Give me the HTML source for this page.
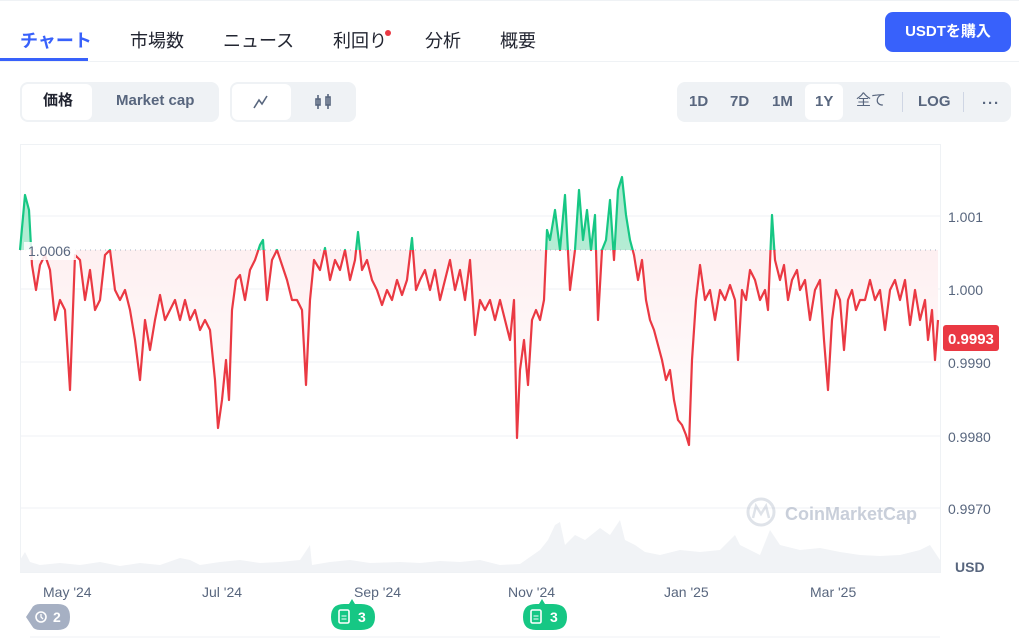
<!DOCTYPE html>
<html><head><meta charset="utf-8"><style>
body{margin:0;width:1019px;height:641px;background:#fff;font-family:"Liberation Sans","Noto Sans CJK JP",sans-serif;position:relative;overflow:hidden}
.topline{position:absolute;left:0;top:0;width:1019px;height:1px;background:#eff2f5}
.tabs{position:absolute;left:0;top:61px;width:1019px;height:1px;background:#eff2f5}
.tab{position:absolute;top:29px;font-size:18px;color:#222531;line-height:24px}
.act{color:#3861fb;font-weight:bold}
.uline{position:absolute;left:0;top:58px;width:88px;height:3px;background:#3861fb}
.btn{position:absolute;left:885px;top:12px;width:126px;height:40px;background:#3861fb;border-radius:8px;color:#fff;font-weight:bold;font-size:15px;text-align:center;line-height:40px}
.grp{position:absolute;top:82px;height:40px;background:#eff2f5;border-radius:8px}
.seg{position:absolute;top:2px;height:36px;background:#fff;border-radius:6px}
.t{position:absolute;font-size:15px;font-weight:bold;color:#58667e;line-height:18px}
.ax{position:absolute;left:948px;font-size:14px;color:#58667e}
.xl{position:absolute;top:584px;font-size:14px;color:#58667e}
</style></head><body>
<div class="topline"></div>
<div class="tab act" style="left:20px">チャート</div>
<div class="tab" style="left:130px">市場数</div>
<div class="tab" style="left:223px">ニュース</div>
<div class="tab" style="left:333px">利回り</div>
<div style="position:absolute;left:385px;top:30px;width:6px;height:6px;border-radius:3px;background:#ea3943"></div>
<div class="tab" style="left:425px">分析</div>
<div class="tab" style="left:500px">概要</div>
<div class="tabs"></div><div class="uline"></div>
<div class="btn">USDTを購入</div>

<div class="grp" style="left:20px;width:199px"><div class="seg" style="left:2px;width:70px"></div>
<div class="t" style="left:23px;top:10px;color:#222531">価格</div><div class="t" style="left:96px;top:10px">Market cap</div></div>
<div class="grp" style="left:230px;width:126px"><div class="seg" style="left:2px;width:59px"></div>
<svg style="position:absolute;left:22px;top:12px" width="18" height="16"><polyline points="2,14 7,6 10,10 15,2" fill="none" stroke="#58667e" stroke-width="1.6"/></svg>
<svg style="position:absolute;left:84px;top:11px" width="20" height="18"><g fill="none" stroke="#58667e" stroke-width="1.6"><rect x="2" y="6" width="4" height="6"/><line x1="4" y1="2" x2="4" y2="16"/><rect x="12" y="4" width="4" height="8"/><line x1="14" y1="1" x2="14" y2="16"/></g></svg></div>

<div class="grp" style="left:677px;width:334px"><div class="seg" style="left:128px;width:38px"></div>
<div class="t" style="left:12px;top:11px">1D</div><div class="t" style="left:53px;top:11px">7D</div><div class="t" style="left:95px;top:11px">1M</div><div class="t" style="left:138px;top:11px">1Y</div>
<div class="t" style="left:179px;top:10px;font-weight:normal">全て</div>
<div style="position:absolute;left:225px;top:10px;width:1px;height:20px;background:#cfd6e4"></div>
<div class="t" style="left:241px;top:11px">LOG</div>
<div style="position:absolute;left:286px;top:10px;width:1px;height:20px;background:#cfd6e4"></div>
<div class="t" style="left:305px;top:13px;letter-spacing:1px">···</div></div>

<svg style="position:absolute;left:0;top:0" width="1019" height="641">
<defs>
<clipPath id="up"><rect x="0" y="0" width="1019" height="250"/></clipPath>
<clipPath id="dn"><rect x="0" y="250" width="1019" height="400"/></clipPath>
<linearGradient id="pg" x1="0" y1="0" x2="0" y2="1"><stop offset="0" stop-color="#fdeaec"/><stop offset="1" stop-color="#fff"/></linearGradient>
<linearGradient id="gg" x1="0" y1="0" x2="0" y2="1"><stop offset="0" stop-color="#8fe3bf"/><stop offset="1" stop-color="#d8f5e8"/></linearGradient>
<polygon id="F" points="20,250 20,250 25,195 29,210 32,265 36,290 40,265 45,255 50,270 55,320 60,300 65,310 70,390 75,255 80,260 85,300 90,270 95,310 100,300 105,255 110,250 115,290 120,300 125,290 130,310 135,340 140,380 145,320 150,350 155,320 160,295 165,320 170,310 175,300 180,320 185,300 190,320 195,310 200,330 205,320 210,330 215,380 218,428 222,400 226,360 229,400 232,310 236,280 240,275 245,300 250,270 255,260 260,245 263,240 267,300 272,260 277,250 282,265 287,280 292,300 297,300 302,310 306,385 310,300 314,260 320,270 325,248 330,280 335,260 340,270 345,250 350,280 355,260 358,232 362,270 367,260 372,280 377,290 382,305 387,290 392,300 397,280 402,295 407,280 412,238 416,290 420,280 425,270 430,290 435,270 440,300 445,280 450,260 455,290 460,270 465,300 470,260 475,335 480,300 485,310 490,300 495,320 500,300 505,320 510,340 514,300 517,438 520,370 524,340 528,385 532,320 536,310 540,320 544,300 547,230 550,240 555,210 560,250 565,195 570,290 575,250 579,190 583,240 587,210 591,250 595,215 598,320 602,250 606,240 610,200 614,260 618,190 622,177 626,215 630,240 634,255 638,280 642,260 646,300 650,320 654,330 658,345 662,360 666,380 670,370 674,400 678,420 682,425 686,435 689,445 692,360 696,300 700,265 705,300 710,290 715,320 720,290 725,300 730,285 735,300 738,360 742,290 746,300 750,270 755,280 760,300 765,290 768,310 772,215 775,260 780,280 784,265 788,300 792,280 797,270 800,290 805,280 810,320 815,290 820,280 824,340 828,390 832,320 836,290 840,300 844,350 848,300 852,290 856,310 860,300 865,300 870,280 875,300 880,290 885,330 890,290 895,280 900,300 905,280 910,325 915,290 920,320 925,300 928,340 932,310 935,360 938,320 938,250"/>
<polyline id="P" fill="none" stroke-width="2.2" stroke-linejoin="round" points="20,250 25,195 29,210 32,265 36,290 40,265 45,255 50,270 55,320 60,300 65,310 70,390 75,255 80,260 85,300 90,270 95,310 100,300 105,255 110,250 115,290 120,300 125,290 130,310 135,340 140,380 145,320 150,350 155,320 160,295 165,320 170,310 175,300 180,320 185,300 190,320 195,310 200,330 205,320 210,330 215,380 218,428 222,400 226,360 229,400 232,310 236,280 240,275 245,300 250,270 255,260 260,245 263,240 267,300 272,260 277,250 282,265 287,280 292,300 297,300 302,310 306,385 310,300 314,260 320,270 325,248 330,280 335,260 340,270 345,250 350,280 355,260 358,232 362,270 367,260 372,280 377,290 382,305 387,290 392,300 397,280 402,295 407,280 412,238 416,290 420,280 425,270 430,290 435,270 440,300 445,280 450,260 455,290 460,270 465,300 470,260 475,335 480,300 485,310 490,300 495,320 500,300 505,320 510,340 514,300 517,438 520,370 524,340 528,385 532,320 536,310 540,320 544,300 547,230 550,240 555,210 560,250 565,195 570,290 575,250 579,190 583,240 587,210 591,250 595,215 598,320 602,250 606,240 610,200 614,260 618,190 622,177 626,215 630,240 634,255 638,280 642,260 646,300 650,320 654,330 658,345 662,360 666,380 670,370 674,400 678,420 682,425 686,435 689,445 692,360 696,300 700,265 705,300 710,290 715,320 720,290 725,300 730,285 735,300 738,360 742,290 746,300 750,270 755,280 760,300 765,290 768,310 772,215 775,260 780,280 784,265 788,300 792,280 797,270 800,290 805,280 810,320 815,290 820,280 824,340 828,390 832,320 836,290 840,300 844,350 848,300 852,290 856,310 860,300 865,300 870,280 875,300 880,290 885,330 890,290 895,280 900,300 905,280 910,325 915,290 920,320 925,300 928,340 932,310 935,360 938,320"/>
</defs>
<rect x="20.5" y="144.5" width="920" height="428" fill="none" stroke="#eff2f5"/>
<g stroke="#eff2f5"><line x1="20" y1="216" x2="940" y2="216"/><line x1="20" y1="289" x2="940" y2="289"/><line x1="20" y1="362" x2="940" y2="362"/><line x1="20" y1="436" x2="940" y2="436"/><line x1="20" y1="508" x2="940" y2="508"/><line x1="30" y1="637" x2="940" y2="637"/></g>
<polygon fill="#f1f3f6" points="20,572 20,560 25,552 30,562 40,565 60,563 80,565 100,562 120,566 140,563 160,565 180,558 190,560 200,565 220,562 240,560 260,563 280,562 300,560 310,545 312,565 330,562 350,560 370,563 400,562 420,563 440,561 460,562 480,560 500,565 520,564 540,550 548,540 555,525 560,522 565,545 575,535 585,540 600,528 610,535 620,520 625,540 635,545 645,552 660,555 680,550 700,552 720,550 735,535 740,545 760,555 770,530 780,545 800,550 820,548 840,552 860,555 880,556 900,555 920,550 930,545 940,560 940,572"/>
<use href="#F" fill="url(#pg)" clip-path="url(#dn)"/>
<use href="#F" fill="url(#gg)" opacity="0.8" clip-path="url(#up)"/>
<line x1="20" y1="250" x2="940" y2="250" stroke="#a6b0c3" stroke-dasharray="1,4"/>
<use href="#P" stroke="#16c784" clip-path="url(#up)"/>
<use href="#P" stroke="#ea3943" clip-path="url(#dn)"/>
<rect x="24" y="242" width="52" height="18" fill="#fff" opacity="0.85"/>
<text x="28" y="256" font-size="14" fill="#58667e" font-family="Liberation Sans">1.0006</text>
<g opacity="0.35"><circle cx="761" cy="512" r="13" fill="none" stroke="#a6b0c3" stroke-width="3"/><polyline points="753,518 756,506 761,514 766,506 769,518" fill="none" stroke="#a6b0c3" stroke-width="2.5"/></g>
<text x="785" y="520" font-size="18" font-weight="bold" fill="#a6b0c3" opacity="0.6" font-family="Liberation Sans">CoinMarketCap</text>
<rect x="943" y="325" width="56" height="26" rx="3" fill="#ea3943"/>
<text x="948" y="344" font-size="15" font-weight="bold" fill="#fff" font-family="Liberation Sans">0.9993</text>
<path d="M26,617 L32,608 Q34,604 40,604 L58,604 Q70,604 70,617 Q70,630 58,630 L40,630 Q34,630 32,626 Z" fill="#a6b0c3"/>
<circle cx="41" cy="617" r="5" fill="none" stroke="#fff" stroke-width="1.6"/>
<polyline points="41,614 41,617 43,619" fill="none" stroke="#fff" stroke-width="1.3"/>
<text x="53" y="622" font-size="14" font-weight="bold" fill="#fff" font-family="Liberation Sans">2</text>
<path d="M331,617 Q331,604 344,604 L349,604 L352,599 L355,604 L361,604 Q375,604 375,617 Q375,630 361,630 L344,630 Q331,630 331,617Z" fill="#16c784"/>
<rect x="339" y="610" width="10" height="13" rx="1.5" fill="none" stroke="#fff" stroke-width="1.6"/>
<line x1="341.5" y1="616" x2="346.5" y2="616" stroke="#fff"/><line x1="341.5" y1="619" x2="346.5" y2="619" stroke="#fff"/>
<text x="358" y="622" font-size="14" font-weight="bold" fill="#fff" font-family="Liberation Sans">3</text>
<path d="M523,617 Q523,604 536,604 L539,604 L542,599 L545,604 L553,604 Q567,604 567,617 Q567,630 553,630 L536,630 Q523,630 523,617Z" fill="#16c784"/>
<rect x="531" y="610" width="10" height="13" rx="1.5" fill="none" stroke="#fff" stroke-width="1.6"/>
<line x1="533.5" y1="616" x2="538.5" y2="616" stroke="#fff"/><line x1="533.5" y1="619" x2="538.5" y2="619" stroke="#fff"/>
<text x="550" y="622" font-size="14" font-weight="bold" fill="#fff" font-family="Liberation Sans">3</text>
</svg>
<div class="ax" style="top:209px">1.001</div>
<div class="ax" style="top:282px">1.000</div>
<div class="ax" style="top:355px">0.9990</div>
<div class="ax" style="top:429px">0.9980</div>
<div class="ax" style="top:501px">0.9970</div>
<div class="ax" style="top:559px;left:955px;font-weight:bold">USD</div>
<div class="xl" style="left:43px">May '24</div>
<div class="xl" style="left:202px">Jul '24</div>
<div class="xl" style="left:354px">Sep '24</div>
<div class="xl" style="left:508px">Nov '24</div>
<div class="xl" style="left:664px">Jan '25</div>
<div class="xl" style="left:810px">Mar '25</div>
</body></html>
